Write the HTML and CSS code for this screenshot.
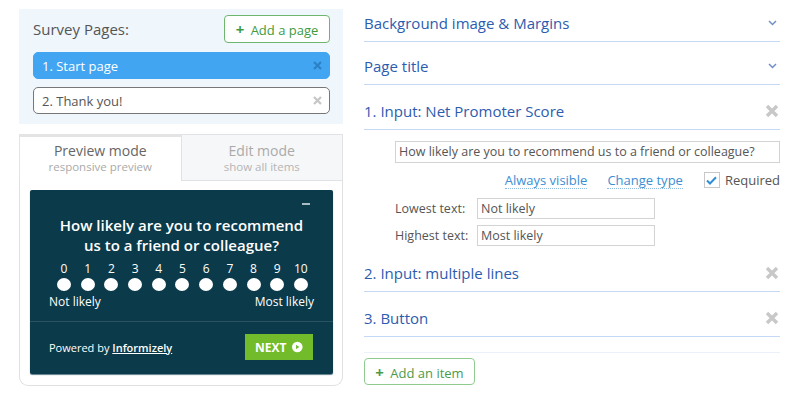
FILE: index.html
```
<!DOCTYPE html>
<html>
<head>
	<meta charset="UTF-8">
	<title>Survey editor</title>
<link rel="stylesheet" href="styles.css">
</head>
<body>
<div class="editor">

  <div class="links">
    <div class="pages">
      <div class="pages-kopf">
        <span class="pages-titel">Survey Pages:</span>
        <button class="gruen-btn"><span class="plus">+</span> Add a page</button>
      </div>
      <div class="seite aktiv">1. Start page <svg class="x" width="9" height="9" viewBox="0 0 9 9"><path d="M1 1 L8 8 M8 1 L1 8" stroke="#2c80c4" stroke-width="2.2"/></svg></div>
      <div class="seite">2. Thank you! <svg class="x" width="9" height="9" viewBox="0 0 9 9"><path d="M1 1 L8 8 M8 1 L1 8" stroke="#c6c6c6" stroke-width="2.2"/></svg></div>
    </div>

    <div class="tabs">
      <div class="tab an">Preview mode<small>responsive preview</small></div>
      <div class="tab">Edit mode<small>show all items</small></div>
    </div>
    <div class="vorschau">
      <div class="umfrage">
        <div class="minus"></div>
        <div class="frage">How likely are you to recommend<br>us to a friend or colleague?</div>
        <div class="skala">
          <span>0</span><span>1</span><span>2</span><span>3</span><span>4</span><span>5</span><span>6</span><span>7</span><span>8</span><span>9</span><span>10</span>
        </div>
        <div class="punkte">
          <i></i><i></i><i></i><i></i><i></i><i></i><i></i><i></i><i></i><i></i><i></i>
        </div>
        <div class="enden"><span>Not likely</span><span>Most likely</span></div>
        <div class="fuss">
          <span class="powered">Powered by <u>Informizely</u></span>
          <span class="next">NEXT
            <svg width="12" height="12" viewBox="0 0 12 12"><circle cx="6" cy="6" r="6" fill="#fff"/><path d="M4.6 3.4 L8.4 6 L4.6 8.6 Z" fill="#72bb2b"/></svg>
          </span>
        </div>
      </div>
    </div>
  </div>

  <div class="rechts">
    <div class="kopf">Background image &amp; Margins <svg class="pfeil" width="9" height="6" viewBox="0 0 9 6"><path d="M1 1 L4.5 4.5 L8 1" fill="none" stroke="#6f8fc6" stroke-width="1.5"/></svg></div>
    <div class="kopf">Page title <svg class="pfeil" width="9" height="6" viewBox="0 0 9 6"><path d="M1 1 L4.5 4.5 L8 1" fill="none" stroke="#6f8fc6" stroke-width="1.5"/></svg></div>
    <div class="kopf item">1. Input: Net Promoter Score <svg class="loesch" width="14" height="14" viewBox="0 0 14 14"><path d="M2 2 L12 12 M12 2 L2 12" stroke="#c8c8c8" stroke-width="3.4"/></svg></div>
    <div class="inhalt">
      <div class="feld lang">How likely are you to recommend us to a friend or colleague?</div>
      <div class="optionen">
        <a>Always visible</a>
        <a>Change type</a>
        <span class="check"><span class="box"><svg width="11" height="9" viewBox="0 0 11 9"><path d="M1 4.5 L4 7.5 L10 1.2" fill="none" stroke="#2f8fd6" stroke-width="2"/></svg></span>Required</span>
      </div>
      <div class="zeile"><label>Lowest text:</label><div class="feld">Not likely</div></div>
      <div class="zeile"><label>Highest text:</label><div class="feld">Most likely</div></div>
    </div>
    <div class="kopf item">2. Input: multiple lines <svg class="loesch" width="14" height="14" viewBox="0 0 14 14"><path d="M2 2 L12 12 M12 2 L2 12" stroke="#c8c8c8" stroke-width="3.4"/></svg></div>
    <div class="kopf item">3. Button <svg class="loesch" width="14" height="14" viewBox="0 0 14 14"><path d="M2 2 L12 12 M12 2 L2 12" stroke="#c8c8c8" stroke-width="3.4"/></svg></div>
    <div class="trenner"></div>
    <button class="gruen-btn hell"><span class="plus">+</span> Add an item</button>
  </div>

</div>
</body>
</html>
```
FILE: styles.css
```
body {
	margin: 0;
	background: #fff;
	font-family: "Open Sans", "Liberation Sans", sans-serif;
	color: #555;
}
.editor {
	display: flex;
	gap: 21px;
	padding: 0 0 0 19px;
}
.links {
	width: 324px;
	padding-top: 9px;
}
.pages {
	background: #eff6fc;
	padding: 6px 13px 10px 14px;
}
.pages-kopf {
	display: flex;
	justify-content: space-between;
	align-items: center;
	height: 28px;
	margin-bottom: 9px;
}
.pages-titel {
	font-size: 15px;
	color: #555;
}
.gruen-btn {
	font-family: "Open Sans", "Liberation Sans", sans-serif;
	font-size: 13px;
	color: #3f9a3f;
	background: #fff;
	border: 1px solid #6eb66e;
	border-radius: 4px;
	height: 28px;
	width: 106px;
	padding: 0;
}
.plus {
	font-weight: bold;
	font-size: 15px;
	margin-right: 3px;
}
.seite {
	display: flex;
	justify-content: space-between;
	align-items: center;
	height: 25px;
	padding: 0 7px 0 8px;
	font-size: 13px;
	color: #555;
	background: #fff;
	border: 1px solid #777;
	border-radius: 5px;
	margin-top: 8px;
}
.seite.aktiv {
	background: #42a5f2;
	border-color: #42a5f2;
	color: #fff;
	margin-top: 0;
}
.tabs {
	display: flex;
	margin-top: 10px;
}
.tab {
	flex: 1;
	text-align: center;
	font-size: 14px;
	color: #aaa;
	background: #f6f7f8;
	border: 1px solid #e0e2e5;
	padding: 7px 0 6px;
	line-height: 17px;
}
.tab small {
	display: block;
	font-size: 11.5px;
	color: #b5b5b5;
	line-height: 15px;
}
.tab.an {
	background: #fff;
	color: #666;
	border: none;
	border-top: 3px solid #e4e4e4;
	border-left: 1px solid #e4e4e4;
	padding-top: 5px;
}
.tab.an small {
	color: #aaa;
}
.vorschau {
	border: 1px solid #e0e0e0;
	border-top: none;
	border-radius: 0 0 9px 9px;
	padding: 9px 9px 11px 10px;
}
.umfrage {
	background: #0b3a4a;
	border-radius: 2px;
	color: #fff;
	box-shadow: 0 1px 1px #5a7c88;
	padding-top: 1px;
}
.minus {
	width: 8px;
	height: 2px;
	background: #a9bcc3;
	margin: 12px 0 0 272px;
}
.frage {
	font-weight: 600;
	font-size: 15px;
	line-height: 20px;
	text-align: center;
	margin-top: 10px;
}
.skala, .punkte {
	display: flex;
	justify-content: space-between;
	padding: 0 24px 0 26px;
}
.skala {
	margin-top: 7px;
	font-size: 12px;
	line-height: 14px;
}
.skala span {
	width: 16px;
	text-align: center;
}
.punkte {
	margin-top: 2px;
	padding: 0 25px 0 27px;
}
.punkte i {
	width: 14px;
	height: 13px;
	border-radius: 50%;
	background: #fff;
}
.enden {
	display: flex;
	justify-content: space-between;
	font-size: 12px;
	margin-top: 3px;
	padding: 0 19px 11px;
	line-height: 16px;
	border-bottom: 1px solid #2a5261;
}
.fuss {
	display: flex;
	justify-content: space-between;
	align-items: center;
	padding: 12px 20px 14px 19px;
}
.powered {
	font-size: 11px;
}
.powered u {
	font-weight: 600;
}
.next {
	display: flex;
	align-items: center;
	gap: 6px;
	background: #72bb2b;
	font-size: 12px;
	font-weight: bold;
	padding: 0 10px;
	height: 26px;
	width: 48px;
}
.rechts {
	width: 416px;
}
.kopf {
	display: flex;
	justify-content: space-between;
	align-items: center;
	font-size: 15px;
	color: #2c5caf;
	line-height: 20px;
	padding: 14px 0 8px;
	border-bottom: 1px solid #c4d9f5;
}
.kopf:first-child {
	padding-top: 13px;
}
.kopf.item {
	padding: 16px 0 8px;
}
.pfeil {
	margin-right: 3px;
}
.loesch {
	margin-right: 1px;
}
.inhalt {
	padding: 11px 0 1px 31px;
	font-size: 12.5px;
}
.feld {
	border: 1px solid #d3d3d3;
	height: 19px;
	line-height: 19px;
	padding: 0 3px;
	color: #555;
	width: 170px;
}
.feld.lang {
	width: auto;
	height: 20px;
	line-height: 20px;
}
.optionen {
	display: flex;
	justify-content: flex-end;
	align-items: center;
	gap: 20px;
	margin-top: 6px;
	height: 22px;
	font-size: 13px;
}
.optionen a {
	color: #3b8ed2;
	border-bottom: 1px dotted #8cbbe3;
	line-height: 16px;
}
.check {
	display: flex;
	align-items: center;
	gap: 5px;
	color: #555;
	margin-left: 1px;
}
.box {
	width: 14px;
	height: 14px;
	border: 1px solid #c8c8c8;
	display: flex;
	align-items: center;
	justify-content: center;
}
.zeile {
	display: flex;
	align-items: center;
	margin-top: 7px;
}
.zeile + .zeile {
	margin-top: 6px;
}
.zeile label {
	width: 82px;
}
.trenner {
	border-bottom: 1px solid #eaf1fb;
	margin-top: 15px;
}
.gruen-btn.hell {
	margin-top: 5px;
	width: 111px;
	height: 27px;
	border-color: #8fcb8f;
	color: #4b9b4b;
}
```
